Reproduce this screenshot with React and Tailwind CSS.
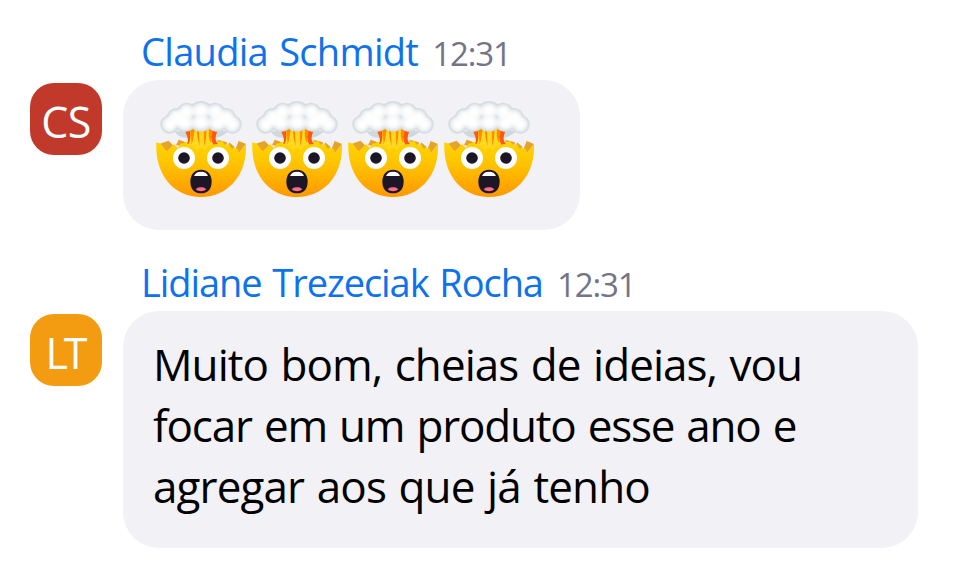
import React from "react";

const messages = [
  {
    id: 1,
    initials: "CS",
    name: "Claudia Schmidt",
    time: "12:31",
    avatarClass: "bg-[#c0392b] tracking-[-0.5px]",
    bubbleClass: "w-[457px] h-[150px]",
    nameClass: "tracking-[-0.7px]",
    emojis: 4,
  },
  {
    id: 2,
    initials: "LT",
    name: "Lidiane Trezeciak Rocha",
    time: "12:31",
    avatarClass: "bg-[#f39c12] pr-[3px] tracking-[-4px]",
    bubbleClass: "w-[795px] h-[237px]",
    nameClass: "tracking-[-1.07px]",
    lines: [
      { text: "Muito bom, cheias de ideias, vou", className: "tracking-[-0.95px]" },
      { text: "focar em um produto esse ano e", className: "tracking-[-1.22px]" },
      { text: "agregar aos que já tenho", className: "tracking-[-0.88px]" },
    ],
  },
];

// Cloud puffs: [cx, cy, rx, ry]
const puffs = [
  [110, 53, 28, 27],
  [196, 53, 28, 27],
  [153, 50, 34, 29],
  [80, 70, 29, 28],
  [228, 70, 29, 28],
  [59, 91, 28, 28],
  [247, 91, 28, 28],
  [104, 86, 33, 28],
  [203, 86, 33, 28],
  [153, 86, 35, 27],
];

function ExplodingHead() {
  return (
    <svg viewBox="9 21 288 288" className="h-24 w-24 shrink-0">
      <defs>
        <linearGradient id="face" x1="0" y1="140" x2="0" y2="309" gradientUnits="userSpaceOnUse">
          <stop offset="0" stopColor="#ffd600" />
          <stop offset="0.4" stopColor="#ffc400" />
          <stop offset="1" stopColor="#ff9800" />
        </linearGradient>
        <radialGradient id="puff">
          <stop offset="0.25" stopColor="#ffffff" />
          <stop offset="0.6" stopColor="#ffffff" stopOpacity="0.75" />
          <stop offset="1" stopColor="#ffffff" stopOpacity="0" />
        </radialGradient>
      </defs>

      {/* Inside of the skull */}
      <path
        d="M30 149 L56 140 L71 156 L50 176 Z M78 154 L86 137 L106 144 L100 156 Z M202 137 L231 145 L228 156 L204 154 Z M237 145 L254 159 L248 170 L236 162 Z M266 141 L288 150 L268 176 L256 166 Z"
        fill="#e6a32a"
      />

      {/* Face */}
      <path
        d="M19 145 L32 149 L50 172 L63 159 L73 151 L83 162 L92 150 L108 144 L200 144 L216 142 L229 155 L234 146 L246 166 L252 158 L256 168 L261 162 L268 176 L288 150 C292 242 235 309 153 309 C71 309 14 242 19 145 Z"
        fill="url(#face)"
      />

      {/* Cloud shadow and lava */}
      <path d="M74 112 Q84 131 108 131 L200 131 Q222 126 234 111 Z" fill="#cfd8dc" />
      <path d="M103 108 L204 108 Q190 134 203 150 L180 152 L126 152 L112 150 Q118 134 103 108 Z" fill="#ff5a0a" />
      <path d="M118 104 L188 104 Q178 132 190 152 L176 154 L164 168 L152 160 L139 168 L128 154 L114 152 Q126 134 118 104 Z" fill="#ffd91f" />
      <path
        d="M120 106 L134 106 Q130 138 125 152 Q125 132 120 106 Z M140 106 L147 106 L149 156 Q141 132 140 106 Z M161 106 L170 106 Q169 136 163 158 Z M177 106 L190 106 Q180 128 183 148 Q174 134 177 106 Z"
        fill="#ff8c00"
      />

      <g fill="#ced7db">
        {puffs.map(([cx, cy, rx, ry]) => (
          <ellipse key={`${cx}-${cy}`} cx={cx} cy={cy} rx={rx} ry={ry} />
        ))}
      </g>
      <g fill="url(#puff)">
        {puffs.map(([cx, cy, rx, ry]) => (
          <ellipse key={`${cx}-${cy}`} cx={cx} cy={cy} rx={rx} ry={ry} />
        ))}
      </g>

      {/* Eyes */}
      <circle cx="102" cy="192" r="33" fill="#fff" />
      <circle cx="204" cy="192" r="33" fill="#fff" />
      <circle cx="102" cy="192" r="17.5" fill="#1c1626" />
      <circle cx="204" cy="192" r="17.5" fill="#1c1626" />

      {/* Mouth */}
      <path d="M153 227 C174 227 185 242 185 263 C185 284 174 298 153 298 C132 298 121 284 121 263 C121 242 132 227 153 227 Z" fill="#1c1626" />
      <path d="M132 246 Q137 233 153 233 Q169 233 174 246 Z" fill="#fff" />
      <path d="M137 286 Q144 278 153 280 Q162 278 169 286 Q164 292 153 292 Q142 292 137 286 Z" fill="#ff6b84" />
    </svg>
  );
}

function Avatar({ initials, className }) {
  return (
    <div
      className={`mt-[54px] flex h-[72px] w-[72px] shrink-0 items-center justify-center rounded-[24px] pt-[5px] text-[43px] leading-none text-white ${className}`}
    >
      {initials}
    </div>
  );
}

function Message({ message }) {
  return (
    <div className="flex gap-[21px]">
      <Avatar initials={message.initials} className={message.avatarClass} />
      <div>
        <div className="flex h-[51px] items-baseline gap-[14px] whitespace-nowrap pl-[18px]">
          <span className={`text-[38px] leading-[44px] text-[#0e72ed] [word-spacing:2px] ${message.nameClass}`}>
            {message.name}
          </span>
          <span className="text-[33px] leading-[43px] tracking-[-1.1px] text-[#747487]">{message.time}</span>
        </div>
        <div className={`rounded-[36px] bg-[#f2f1f6] ${message.bubbleClass}`}>
          {message.emojis && (
            <div className="flex pl-[30px] pt-[21px]">
              {Array.from({ length: message.emojis }, (_, i) => (
                <ExplodingHead key={i} />
              ))}
            </div>
          )}
          {message.lines && (
            <div className="whitespace-nowrap pl-[30px] pt-[23px] text-[44px] leading-[61px] text-black [word-spacing:2px]">
              {message.lines.map((line) => (
                <span key={line.text} className={`block ${line.className}`}>
                  {line.text}
                </span>
              ))}
            </div>
          )}
        </div>
      </div>
    </div>
  );
}

export default function App() {
  return (
    <main className="flex h-[567px] w-[976px] flex-col gap-[30px] overflow-hidden bg-white pl-[30px] pt-[29px] font-['Open_Sans',sans-serif]">
      {messages.map((message) => (
        <Message key={message.id} message={message} />
      ))}
    </main>
  );
}
